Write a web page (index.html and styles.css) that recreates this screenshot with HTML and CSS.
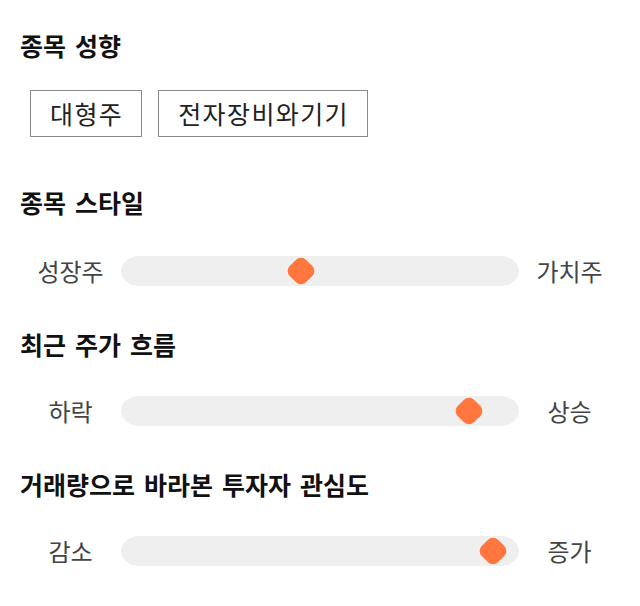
FILE: index.html
```html
<!DOCTYPE html>
<html lang="ko">
<head>
<meta charset="utf-8">
<link rel="stylesheet" href="styles.css">
</head>
<body>
<div class="page">
  <section class="section">
    <h2 class="section-title">종목 성향</h2>
    <div class="tags">
      <span class="tag">대형주</span>
      <span class="tag">전자장비와기기</span>
    </div>
  </section>
  <section class="section section-first-slider">
    <h2 class="section-title">종목 스타일</h2>
    <div class="slider-row">
      <span class="label">성장주</span>
      <div class="track"><span class="knob" style="left: 45.2%"></span></div>
      <span class="label">가치주</span>
    </div>
  </section>
  <section class="section">
    <h2 class="section-title">최근 주가 흐름</h2>
    <div class="slider-row">
      <span class="label">하락</span>
      <div class="track"><span class="knob" style="left: 87.4%"></span></div>
      <span class="label">상승</span>
    </div>
  </section>
  <section class="section">
    <h2 class="section-title">거래량으로 바라본 투자자 관심도</h2>
    <div class="slider-row">
      <span class="label">감소</span>
      <div class="track"><span class="knob" style="left: 93.5%"></span></div>
      <span class="label">증가</span>
    </div>
  </section>
</div>
</body>
</html>
```
FILE: styles.css
```css
html, body {
  margin: 0;
  padding: 0;
  background: #ffffff;
}
body {
  font-family: "Noto Sans CJK KR", "Noto Sans", sans-serif;
  color: #111;
}
.page {
  padding: 30px 20px 0 20px;
  display: flex;
  flex-direction: column;
}
.section + .section {
  margin-top: 43px;
}
.section-first-slider.section {
  margin-top: 50px;
}
.section-first-slider .slider-row {
  margin-top: 39px;
}
.section-title {
  margin: 0;
  font-size: 25px;
  line-height: 30px;
  font-weight: 700;
  word-spacing: 2px;
  color: #111;
}
.tags {
  display: flex;
  gap: 16px;
  margin-top: 30px;
  margin-left: 10px;
}
.tag {
  display: inline-block;
  border: 1px solid #8a8a8a;
  padding: 0 18px 0 19px;
  height: 45px;
  line-height: 45px;
  font-size: 25px;
  letter-spacing: 1.4px;
  color: #222;
}
.slider-row {
  display: grid;
  grid-template-columns: 101px 1fr 101px;
  align-items: center;
  height: 30px;
  margin-top: 37px;
}
.label {
  text-align: center;
  font-size: 24px;
  line-height: 30px;
  color: #444;
}
.track {
  position: relative;
  height: 30px;
  background: #efefef;
  border-radius: 18px / 15px;
}
.knob {
  position: absolute;
  top: 50%;
  width: 23px;
  height: 23px;
  background: #ff763f;
  border-radius: 7px;
  transform: translate(-50%, -50%) rotate(45deg);
}
```
